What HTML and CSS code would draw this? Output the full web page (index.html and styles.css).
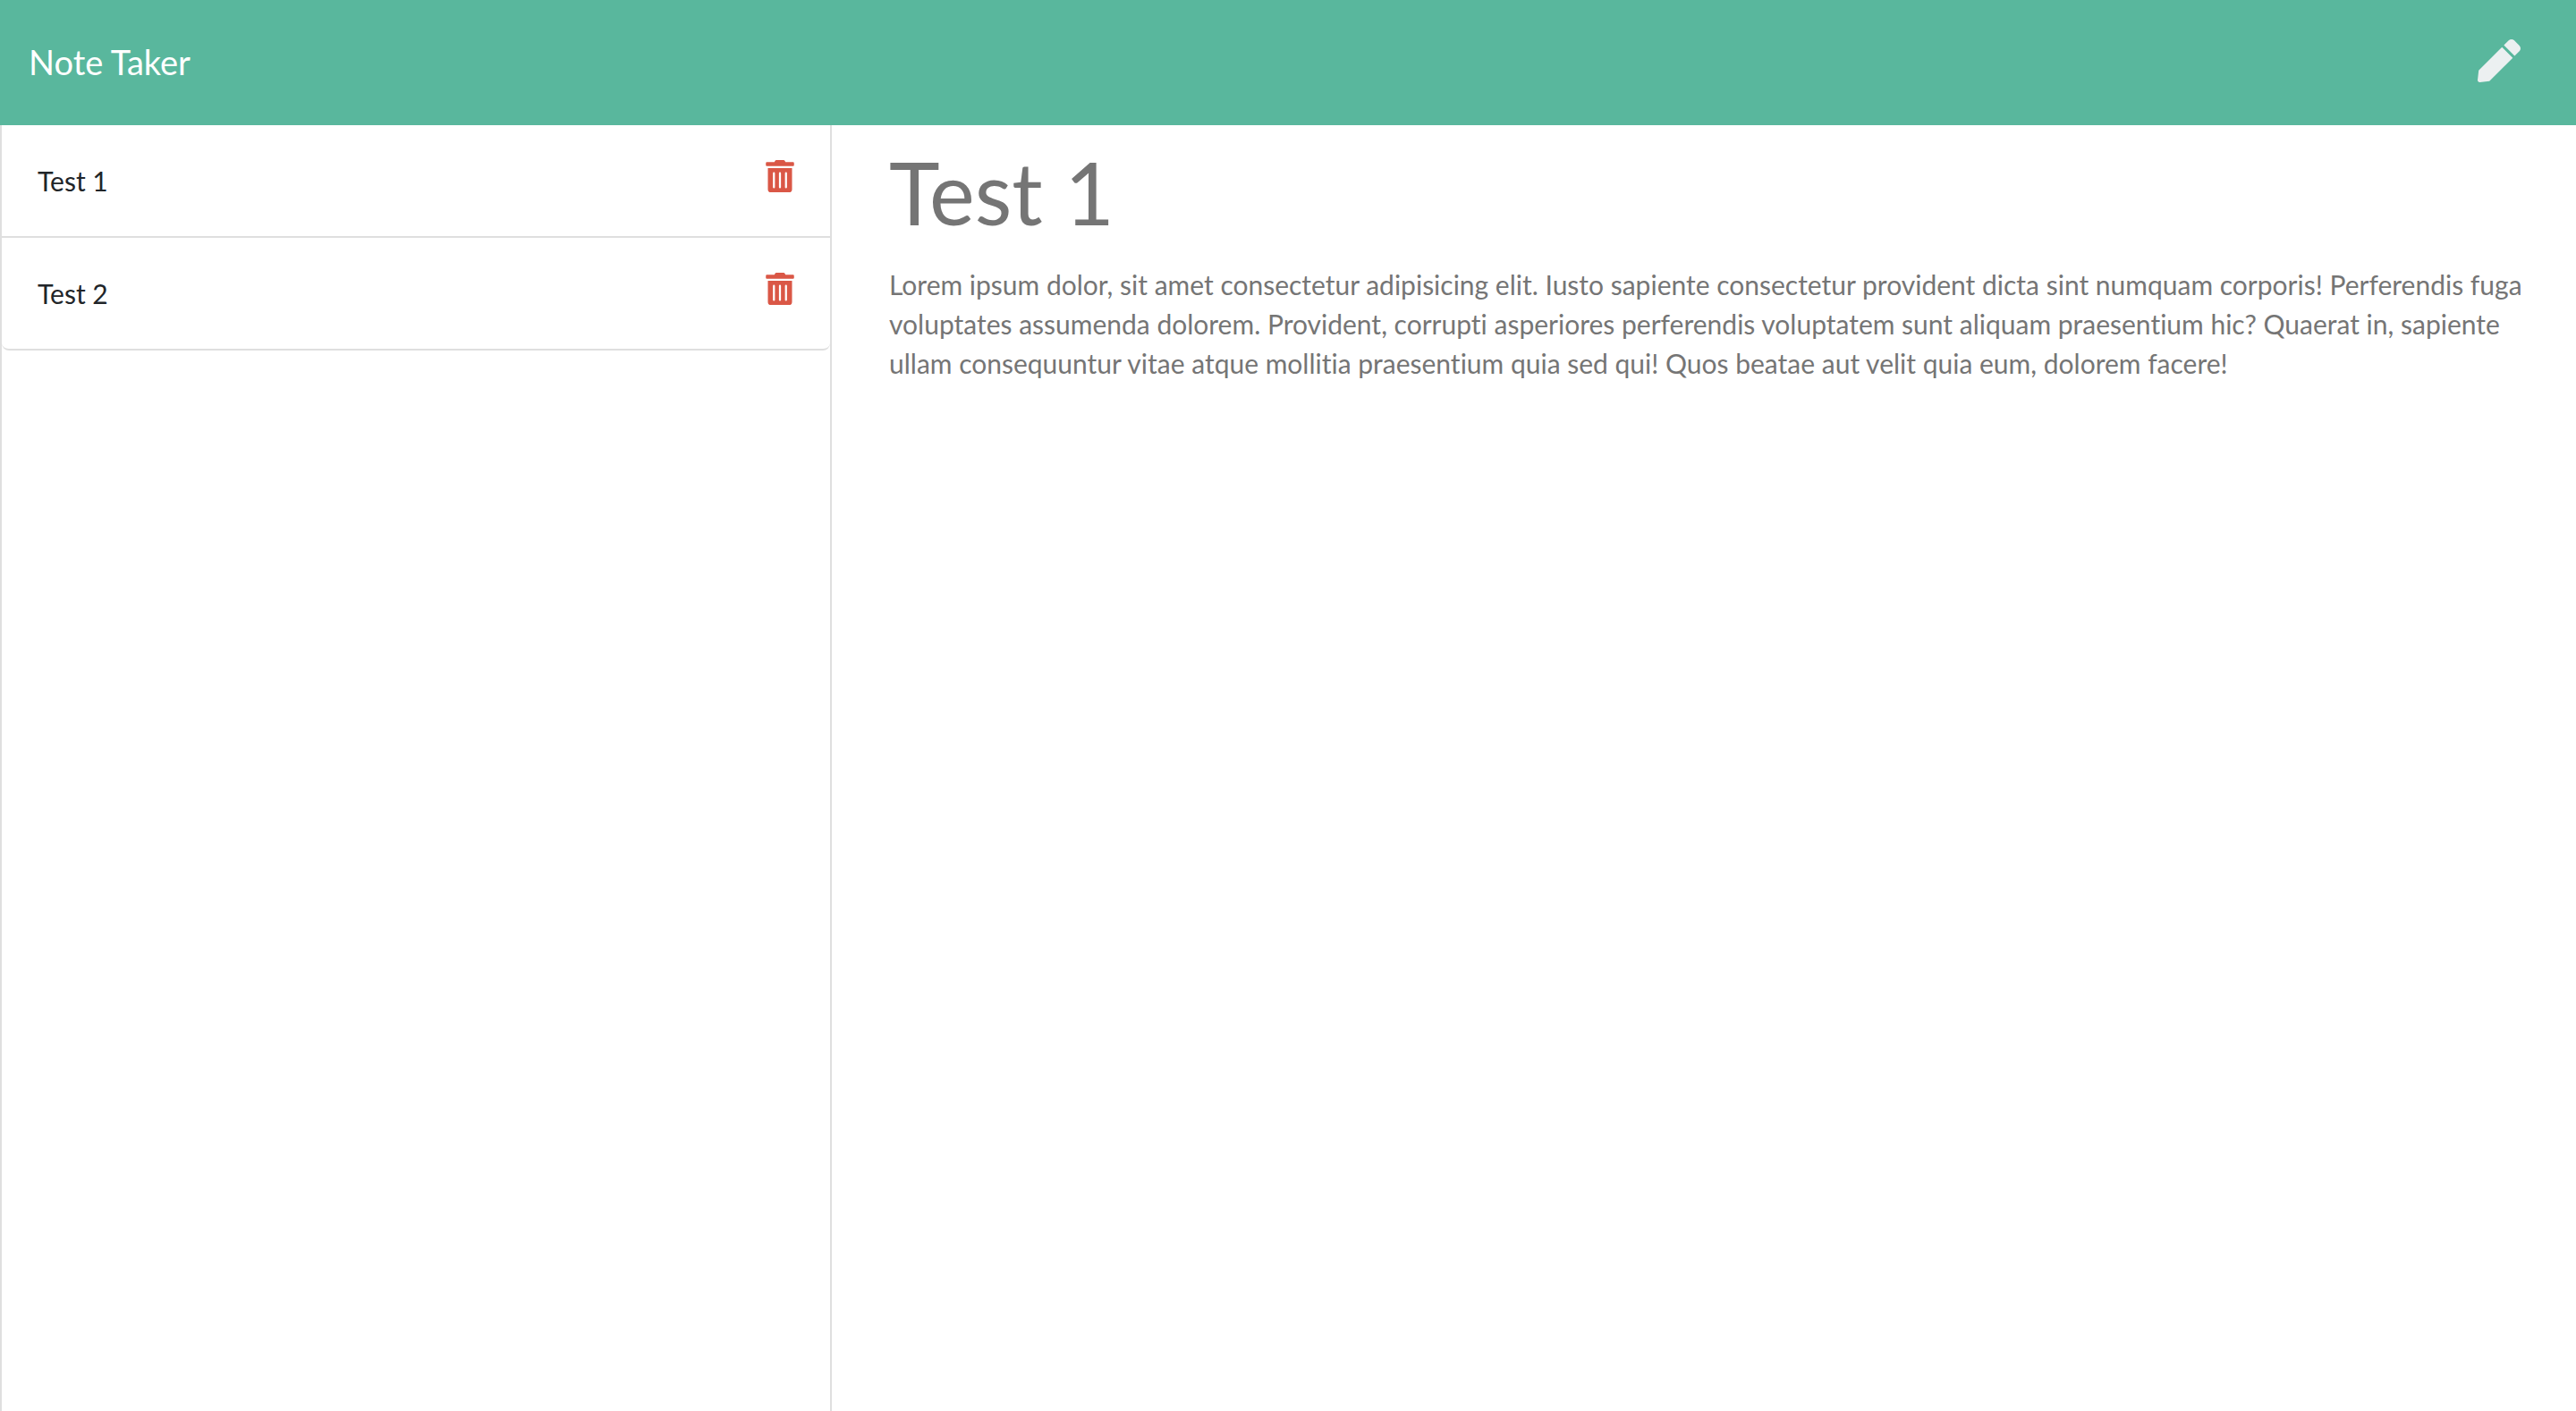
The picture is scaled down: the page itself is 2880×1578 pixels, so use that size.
FILE: index.html
```html
<!DOCTYPE html>
<html lang="en">
<head>
<meta charset="utf-8">
<title>Note Taker</title>
<link rel="stylesheet" href="styles.css">
</head>
<body>
<header class="navbar">
  <a class="brand" href="#">Note Taker</a>
  <button class="new-note" type="button" aria-label="New note">
    <svg viewBox="0 0 512 512" aria-hidden="true"><path d="M290.74 93.24l128.02 128.02-277.99 277.99-114.14 12.6C11.35 513.54-1.56 500.62.14 485.34l12.7-114.22 277.9-277.88zm207.2-19.06l-60.11-60.11c-18.75-18.75-49.16-18.75-67.91 0l-56.55 56.55 128.02 128.02 56.55-56.55c18.75-18.76 18.75-49.16 0-67.91z"/></svg>
  </button>
</header>
<main class="layout">
  <aside class="sidebar">
    <ul class="notes">
      <li class="note">
        <a class="note-title" href="#">Test 1</a>
        <button class="delete" type="button" aria-label="Delete Test 1"><svg viewBox="0 0 448 512" aria-hidden="true"><path d="M32 464a48 48 0 0 0 48 48h288a48 48 0 0 0 48-48V128H32zm272-256a16 16 0 0 1 32 0v224a16 16 0 0 1-32 0zm-96 0a16 16 0 0 1 32 0v224a16 16 0 0 1-32 0zm-96 0a16 16 0 0 1 32 0v224a16 16 0 0 1-32 0zM432 32H312l-9.400-18.700A24 24 0 0 0 281.100 0H166.800a23.700 23.700 0 0 0-21.400 13.300L136 32H16A16 16 0 0 0 0 48v32a16 16 0 0 0 16 16h416a16 16 0 0 0 16-16V48a16 16 0 0 0-16-16z"/></svg></button>
      </li>
      <li class="note">
        <a class="note-title" href="#">Test 2</a>
        <button class="delete" type="button" aria-label="Delete Test 2"><svg viewBox="0 0 448 512" aria-hidden="true"><path d="M32 464a48 48 0 0 0 48 48h288a48 48 0 0 0 48-48V128H32zm272-256a16 16 0 0 1 32 0v224a16 16 0 0 1-32 0zm-96 0a16 16 0 0 1 32 0v224a16 16 0 0 1-32 0zm-96 0a16 16 0 0 1 32 0v224a16 16 0 0 1-32 0zM432 32H312l-9.400-18.700A24 24 0 0 0 281.100 0H166.800a23.700 23.700 0 0 0-21.400 13.300L136 32H16A16 16 0 0 0 0 48v32a16 16 0 0 0 16 16h416a16 16 0 0 0 16-16V48a16 16 0 0 0-16-16z"/></svg></button>
      </li>
    </ul>
  </aside>
  <article class="content">
    <h1 class="heading">Test 1</h1>
    <p class="text">Lorem ipsum dolor, sit amet consectetur adipisicing elit. Iusto sapiente consectetur provident dicta sint numquam corporis! Perferendis fuga voluptates assumenda dolorem. Provident, corrupti asperiores perferendis voluptatem sunt aliquam praesentium hic? Quaerat in, sapiente ullam consequuntur vitae atque mollitia praesentium quia sed qui! Quos beatae aut velit quia eum, dolorem facere!</p>
  </article>
</main>
</body>
</html>
```

FILE: styles.css
```css
* { box-sizing: border-box; }
body {
  margin: 0;
  min-height: 100vh;
  display: flex;
  flex-direction: column;
  background: #fff;
  font-family: Lato, "Liberation Sans", sans-serif;
  font-size: 30px;
  line-height: 44px;
  font-variant-ligatures: none;
}
button { border: 0; padding: 0; background: none; cursor: pointer; }
svg { display: block; fill: currentColor; }
.navbar {
  display: flex;
  align-items: center;
  justify-content: space-between;
  padding: 44px 62px 48px 32px;
  background: #59b79d;
}
.brand { padding-top: 2px; color: #fff; font-size: 38px; text-decoration: none; }
.new-note { color: #ecf0f1; }
.new-note svg { width: 48px; height: 48px; }
.layout { flex: 1; display: flex; }
.sidebar {
  width: 930px;
  flex: none;
  border: solid #dfdfdf;
  border-width: 0 2px;
}
.notes { list-style: none; margin: 0; padding: 0; }
.note {
  display: flex;
  justify-content: space-between;
  align-items: flex-start;
  padding: 39px 40px;
  border-bottom: 2px solid #dfdfdf;
}
.note:last-child { border-radius: 0 0 8px 8px; }
.note-title { color: #212529; line-height: 46px; text-decoration: none; }
.delete { color: #da5746; }
.delete svg { width: 32px; height: 36px; }
.content { flex: 1; padding: 16px 48px 16px 64px; color: #757575; }
.heading { margin: 0 0 22px; font-size: 96px; line-height: 118px; font-weight: 400; }
.text { margin: 0; }
```
